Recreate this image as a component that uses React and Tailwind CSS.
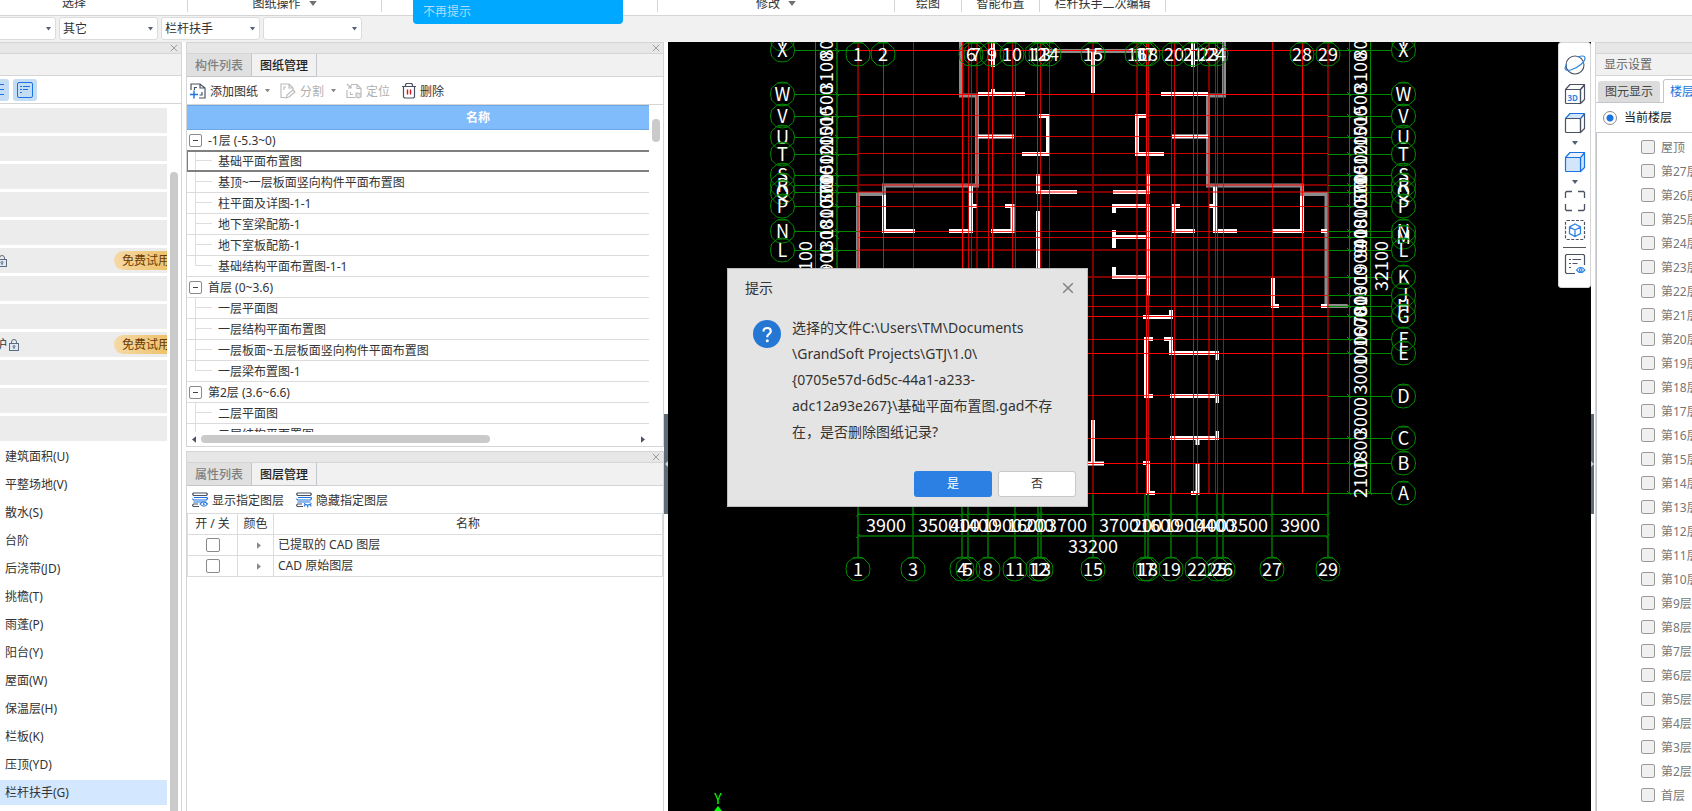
import React from "react";

const INK = "#4a5263";
const BLUE = "#1a73e0";

/* ---------- small icons ---------- */

function Caret({ className = "", size = 6, color = "#555f6e" }) {
  return (
    <svg className={className} width={size} height={size / 2 + 1} viewBox="0 0 6 4" aria-hidden="true">
      <path d="M0 0h6L3 4z" fill={color} />
    </svg>
  );
}

function SideArrow({ dir, color = "#4a5263", className = "" }) {
  return (
    <svg className={className} width="4" height="7" viewBox="0 0 5 8" aria-hidden="true">
      <path d={dir === "left" ? "M5 0v8L0 4z" : "M0 0v8l5-4z"} fill={color} />
    </svg>
  );
}

function CloseIcon({ size = 9, color = "#999" }) {
  return (
    <svg width={size} height={size} viewBox="0 0 10 10" stroke={color} strokeWidth="1.2" aria-hidden="true">
      <path d="M1 1l8 8M9 1l-8 8" />
    </svg>
  );
}

function Lock() {
  return (
    <svg className="shrink-0" width="10" height="12" viewBox="0 0 10 12" fill="none" stroke="#5d6b80" aria-hidden="true">
      <path d="M2.5 4.5V3a2.5 2.5 0 015 0v1.5" />
      <rect x=".5" y="4.5" width="9" height="7" fill="#dfe9f3" />
      <circle cx="5" cy="7.5" r="1" />
      <path d="M5 8.5V10" />
    </svg>
  );
}

function ListIcon() {
  return (
    <svg width="16" height="16" viewBox="0 0 16 16" fill="none" stroke={BLUE} aria-hidden="true">
      <rect x=".5" y=".5" width="15" height="15" rx="1.5" />
      <path d="M3 4.5h2M6 4.5h7M3 7.5h2M6 7.5h5M3 10.5h2" />
    </svg>
  );
}

function AddSheetIcon() {
  return (
    <svg width="16" height="16" viewBox="0 0 16 16" fill="none" stroke={INK} strokeWidth="1.2" aria-hidden="true">
      <path d="M1 7V1h9l5 4v10H9M10 1v4h5" />
      <path d="M4.5 7V4.500H7M12 9v3H9.500" />
      <path d="M0 11.500h8M4 7.500v8" stroke={BLUE} strokeWidth="1.400" />
    </svg>
  );
}

function SplitIcon() {
  return (
    <svg width="16" height="16" viewBox="0 0 16 16" fill="none" stroke="#b9b9b9" strokeWidth="1.1" aria-hidden="true">
      <path d="M5 14.500H1V1h8l4 4v2M9 1v4h4M4 7V4h2" />
      <path d="M7 12l6-5 2 2-6 5-3 1z" />
    </svg>
  );
}

function LocateIcon() {
  return (
    <svg width="16" height="16" viewBox="0 0 16 16" fill="none" stroke="#b9b9b9" strokeWidth="1.1" aria-hidden="true">
      <path d="M1 7v7.500h8M5 1.500h6l4 4V11M11 1.500v4h4M4.500 9v2.500H7" />
      <path d="M1 1l4 4M5 2v3H2" />
      <path d="M10 10v4l3 1 2-1v-3l-4-1z" fill="#e6e6e6" />
    </svg>
  );
}

function TrashIcon() {
  return (
    <svg width="14" height="16" viewBox="0 0 14 16" fill="none" stroke={INK} strokeWidth="1.2" aria-hidden="true">
      <path d="M0 3.500h14M3.500 3V1.500l1-1h5l1 1V3M1.500 4v10l1 1h9l1-1V4" />
      <path d="M5.500 6.500v5M8.500 6.500v5" stroke="#d01616" strokeWidth="1.400" />
    </svg>
  );
}

function LayersIcon({ open }) {
  return (
    <svg width="16" height="16" viewBox="0 0 16 16" fill="none" aria-hidden="true">
      <g stroke={INK} strokeWidth="1.200">
        <path d="M1.500 1h13l1 1.200-1 1.300h-13L.5 2.200z" />
        <path d="M7 14.500H1.500l-1-1.200 1-1.300H6" />
      </g>
      <path d="M2 5.500h13l.5 1.200-1 1.300h-13L.5 6.700M1.500 10h13" stroke={BLUE} strokeWidth="1.200" />
      {open ? (
        <g stroke={BLUE} strokeWidth="1.100">
          <path d="M8 12q3.500-4 7.500 0-3.500 4.500-7.500 0z" fill="#fff" />
          <path d="M11.700 11v1.500h1" />
        </g>
      ) : (
        <path d="M8 11.500q3.500 3 7.500 0M9 13l-1 1.500M11.700 13.500V15.500M14.300 13l1 1.500" stroke={BLUE} strokeWidth="1.100" />
      )}
    </svg>
  );
}

function OrbitIcon() {
  return (
    <svg width="22" height="22" viewBox="0 0 22 22" fill="none" aria-hidden="true">
      <circle cx="11" cy="11" r="9" stroke={INK} strokeWidth="1.100" />
      <path d="M14 3c4-1.500 7-1.500 7 1 0 4-6 9-13 11.500C4 17 1 16.500 1 14.500c0-1.500 1-3 2-4" stroke="#2f86e8" strokeWidth="1.200" />
    </svg>
  );
}

function CubeIcon({ front = INK, face = "none", top = INK, topFill = "none", label }) {
  return (
    <svg width="22" height="22" viewBox="0 0 22 22" fill="none" strokeWidth="1.200" strokeLinejoin="round" aria-hidden="true">
      <path d="M16.500 6.500L20.500 2v14.500l-4 4z" stroke={front} fill={face} />
      <path d="M1.500 6.500L6 1.500h14.500l-4 5z" stroke={top} fill={topFill} />
      <rect x="1.500" y="6.500" width="15" height="14" rx="1" stroke={front} fill={face} />
      {label && (
        <text x="3.500" y="18" fontSize="8" fontWeight="700" fill="#2f86e8" fontFamily="Open Sans, sans-serif">
          3D
        </text>
      )}
    </svg>
  );
}

function FrameIcon() {
  return (
    <svg width="22" height="22" viewBox="0 0 22 22" fill="none" stroke={INK} strokeWidth="1.300" aria-hidden="true">
      <path d="M1.500 8V2.500l1-1H8M14 1.500h5.500l1 1V8M20.500 14v5.500l-1 1H14M8 20.500H2.500l-1-1V14" />
    </svg>
  );
}

function BoxSelectIcon() {
  return (
    <svg width="22" height="22" viewBox="0 0 22 22" fill="none" aria-hidden="true">
      <rect x="1.500" y="1.500" width="19" height="19" rx="1.500" stroke={INK} strokeWidth="1.200" strokeDasharray="3 1.500" />
      <path d="M11 5l5.500 3v6.500L11 17.500l-5.500-3V8zM5.500 8L11 11l5.500-3M11 11v6.500" stroke="#2f86e8" strokeWidth="1.300" />
    </svg>
  );
}

function ListEyeIcon() {
  return (
    <svg width="22" height="22" viewBox="0 0 22 22" fill="none" stroke={INK} strokeWidth="1.200" aria-hidden="true">
      <path d="M11 20.500H2.500l-1-1v-17l1-1h17l1 1V12" />
      <path d="M5 6.500h2M8.500 6.500h8.500M5 10.500h2M8.500 10.500h5M5 14.500h2" />
      <path d="M12.500 17q4.200-5.500 8.500 0-4.300 5-8.500 0z" stroke="#2f86e8" fill="#fff" />
      <circle cx="16.700" cy="17" r="1.300" stroke="#2f86e8" />
    </svg>
  );
}

/* ---------- ribbon ---------- */

function RibbonGroup({ label, arrow, className }) {
  return (
    <div className={`h-[12px] shrink-0 border-r border-[#d5d5d5] ${className}`}>
      {label && (
        <button type="button" className="-mt-[5px] flex items-center gap-2 leading-4 whitespace-nowrap">
          {label}
          {arrow && <Caret size={8} color="#707070" />}
        </button>
      )}
    </div>
  );
}

function Ribbon() {
  return (
    <header className="relative flex h-[16px] shrink-0 overflow-hidden border-b border-[#d5d5d5] bg-white">
      <RibbonGroup label="选择" className="w-[188px] pl-[62px]" />
      <RibbonGroup label="图纸操作" arrow className="flex w-[194px] justify-center" />
      <RibbonGroup className="w-[276px]" />
      <RibbonGroup label="修改" arrow className="flex w-[237px] justify-center" />
      <RibbonGroup label="绘图" className="flex w-[67px] justify-center" />
      <RibbonGroup label="智能布置" className="flex w-[78px] justify-center" />
      <RibbonGroup label="栏杆扶手二次编辑" className="flex w-[126px] justify-center" />
    </header>
  );
}

function Combo({ value, label, className }) {
  return (
    <div className={`relative h-[23px] shrink-0 ${className}`}>
      <select
        aria-label={label}
        defaultValue={value}
        className="h-full w-full appearance-none rounded-[3px] border border-[#dcdcdc] bg-white pl-[3px] text-[12px] text-[#333]"
      >
        <option value={value}>{value}</option>
      </select>
      <Caret size={5} className="pointer-events-none absolute top-[10px] right-[5px]" />
    </div>
  );
}

function ComboBar() {
  return (
    <div className="flex h-[26px] shrink-0 items-start gap-[3px] bg-[#f1f1f1] pt-px">
      <Combo label="楼层" value="" className="-ml-1 w-[60px]" />
      <Combo label="构件类别" value="其它" className="w-[99px]" />
      <Combo label="构件类型" value="栏杆扶手" className="w-[99px]" />
      <Combo label="构件名称" value="" className="w-[99px]" />
    </div>
  );
}

/* ---------- panels ---------- */

function Grip({ closable = true }) {
  return (
    <div className="flex h-[12px] shrink-0 items-center justify-end border-y border-[#d5d5d5] bg-[#e7e7e7] pr-[3px]">
      {closable && (
        <button type="button" aria-label="关闭面板">
          <CloseIcon size={8} />
        </button>
      )}
    </div>
  );
}

function TabStrip({ tabs }) {
  return (
    <div role="tablist" className="flex h-[23px] shrink-0 border-b border-[#d5d5d5] bg-[#f1f1f1]">
      {tabs.map((t, i) => (
        <button
          key={t}
          type="button"
          role="tab"
          aria-selected={i === 1}
          className={
            i === 1
              ? "h-[23px] w-[66px] border border-t-0 border-[#c3c7cc] bg-[#f1f1f1] pt-[2px] font-medium text-[#222]"
              : "h-[23px] w-[64px] border-b border-[#c3c7cc] bg-[#e0e0e0] pt-[2px] font-medium text-[#808080]"
          }
        >
          {t}
        </button>
      ))}
    </div>
  );
}

const GROUPS = ["", "", "", "", "", "trial-a", "", "", "trial-b", "", "", ""];
const MODULES = [
  "建筑面积(U)", "平整场地(V)", "散水(S)", "台阶", "后浇带(JD)", "挑檐(T)", "雨蓬(P)",
  "阳台(Y)", "屋面(W)", "保温层(H)", "栏板(K)", "压顶(YD)", "栏杆扶手(G)",
];

function TrialRow({ text }) {
  return (
    <>
      {text && <span className="-ml-[5px]">{text}</span>}
      <span className={text ? "ml-[2px]" : "-ml-[3px]"}>
        <Lock />
      </span>
      <span className="ml-auto flex h-[19px] w-[53px] items-center rounded-l-full bg-linear-to-r from-[#f5d9a5] to-[#eec26b] pl-2 whitespace-nowrap text-[#6b3a07]">
        免费试用
      </span>
    </>
  );
}

function ModulePanel() {
  return (
    <aside className="flex w-[182px] shrink-0 flex-col border-r border-[#d5d5d5] bg-white">
      <Grip />
      <div className="h-[22px] shrink-0 border-b border-[#d5d5d5] bg-[#f1f1f1]" />
      <div className="flex h-[28px] shrink-0 items-center gap-1 border-b border-[#d5d5d5]">
        <button type="button" aria-label="图标视图" className="-ml-[15px] flex h-[22px] w-[24px] items-center justify-center rounded-[3px] bg-[#c5dcf5]">
          <svg width="16" height="16" viewBox="0 0 16 16" stroke={BLUE} aria-hidden="true">
            <path d="M3 2.500h12M3 7.500h12M3 12.500h12" />
          </svg>
        </button>
        <button type="button" aria-label="列表视图" className="flex h-[22px] w-[24px] items-center justify-center rounded-[3px] bg-[#c5dcf5]">
          <ListIcon />
        </button>
      </div>
      <div className="flex min-h-0 flex-1 overflow-hidden">
        <ul className="mt-1 flex w-[167px] shrink-0 flex-col gap-[3px]">
          {GROUPS.map((g, i) => (
            <li key={i} className="flex h-[25px] shrink-0 items-center overflow-hidden bg-[#ececec]">
              {g === "trial-a" && <TrialRow />}
              {g === "trial-b" && <TrialRow text="护" />}
            </li>
          ))}
          {MODULES.map((m, i) => (
            <li
              key={m}
              className={`flex h-[25px] shrink-0 items-center pl-[5px] ${i === MODULES.length - 1 ? "bg-[#d3e7ff]" : ""}`}
            >
              <a href="#module">{m}</a>
            </li>
          ))}
        </ul>
        <div className="mt-[68px] ml-[3px] w-2 rounded-t-full bg-[#cacaca]" />
      </div>
    </aside>
  );
}

const TREE = [
  ["-1层 (-5.3~0)", ["基础平面布置图", "基顶~一层板面竖向构件平面布置图", "柱平面及详图-1-1", "地下室梁配筋-1", "地下室板配筋-1", "基础结构平面布置图-1-1"]],
  ["首层 (0~3.6)", ["一层平面图", "一层结构平面布置图", "一层板面~五层板面竖向构件平面布置图", "一层梁布置图-1"]],
  ["第2层 (3.6~6.6)", ["二层平面图", "二层结构平面置图", "二层梁布置图"]],
];

function TreeLeaf({ name, last, selected }) {
  return (
    <li
      className={
        selected
          ? "-mt-px flex h-[22px] items-center border-y-2 border-l border-[#7f7f7f] pl-[7px]"
          : "flex h-[21px] items-center border-b border-[#dcdcdc] pl-2"
      }
    >
      <span className="flex h-full w-[17px] flex-col">
        <span className="h-1/2 border-b border-l border-[#dedede]" />
        {!last && <span className="h-1/2 border-l border-[#dedede]" />}
      </span>
      <span className="ml-[6px] pt-[2px] whitespace-nowrap">{name}</span>
    </li>
  );
}

function SheetTree() {
  return (
    <ul className="h-[302px] overflow-hidden">
      {TREE.map(([floor, sheets]) => (
        <li key={floor}>
          <div className="flex h-[21px] items-center gap-[6px] border-b border-[#dcdcdc] pl-[2px]">
            <button
              type="button"
              aria-label="折叠"
              className="flex h-[13px] w-[13px] items-center justify-center rounded-[2px] border border-[#8a8a8a]"
            >
              <span className="h-px w-[5px] bg-[#444]" />
            </button>
            <span className="pt-[2px]">{floor}</span>
          </div>
          <ul>
            {sheets.map((s, i) => (
              <TreeLeaf key={s} name={s} last={i === sheets.length - 1} selected={s === "基础平面布置图"} />
            ))}
          </ul>
        </li>
      ))}
    </ul>
  );
}

function ToolButton({ icon, children, disabled, arrow }) {
  return (
    <button
      type="button"
      disabled={disabled}
      className={`flex items-center gap-1 whitespace-nowrap ${disabled ? "text-[#b0b0b0]" : "text-[#333]"}`}
    >
      {icon}
      <span className="pt-[2px]">{children}</span>
      {arrow && <Caret size={5} color="#888" className="ml-[3px]" />}
    </button>
  );
}

function SheetPanel() {
  return (
    <section className="flex shrink-0 flex-col border-r border-b border-l border-[#d5d5d5] bg-white">
      <Grip />
      <TabStrip tabs={["构件列表", "图纸管理"]} />
      <div className="flex h-[28px] items-center gap-[10px] border-b border-[#d5d5d5] pl-[3px]">
        <ToolButton icon={<AddSheetIcon />} arrow>添加图纸</ToolButton>
        <ToolButton icon={<SplitIcon />} disabled arrow>分割</ToolButton>
        <ToolButton icon={<LocateIcon />} disabled>定位</ToolButton>
        <div className="pl-[2px]">
          <ToolButton icon={<TrashIcon />}>删除</ToolButton>
        </div>
      </div>
      <div className="flex">
        <div className="w-[462px] shrink-0">
          <div className="h-[25px] border-y border-[#6ca7e6] bg-[#80bbfb] pl-[120px] text-center leading-[23px] font-bold text-white">
            名称
          </div>
          <SheetTree />
        </div>
        <div className="mt-[14px] ml-[3px] h-[23px] w-2 rounded-full bg-[#cacaca]" />
      </div>
      <div className="flex h-[14px] items-center pl-[5px]">
        <SideArrow dir="left" />
        <span className="ml-[5px] h-2 w-[289px] rounded-full bg-[#cacaca]" />
        <SideArrow dir="right" className="mr-[18px] ml-auto" />
      </div>
    </section>
  );
}

function LayerPanel() {
  return (
    <section className="flex min-h-0 flex-1 flex-col border-x border-[#d5d5d5] bg-white">
      <Grip />
      <TabStrip tabs={["属性列表", "图层管理"]} />
      <div className="flex h-[27px] shrink-0 items-center gap-[12px] pl-[5px]">
        <ToolButton icon={<LayersIcon open />}>显示指定图层</ToolButton>
        <ToolButton icon={<LayersIcon />}>隐藏指定图层</ToolButton>
      </div>
      <table className="w-full table-fixed border-collapse [&_td]:border [&_td]:border-[#dcdcdc] [&_th]:border [&_th]:border-[#dcdcdc] [&_th]:font-normal">
        <thead>
          <tr className="h-[21px]">
            <th scope="col" className="w-[50px]">开 / 关</th>
            <th scope="col" className="w-[36px]">颜色</th>
            <th scope="col">名称</th>
          </tr>
        </thead>
        <tbody>
          {["已提取的 CAD 图层", "CAD 原始图层"].map((n) => (
            <tr key={n} className="h-[21px]">
              <td>
                <input
                  type="checkbox"
                  aria-label={n}
                  className="mx-auto block h-[14px] w-[14px] appearance-none rounded-[2px] border border-[#8a8a8a] bg-white"
                />
              </td>
              <td>
                <SideArrow dir="right" color="#888" className="ml-[19px]" />
              </td>
              <td className="pl-1">{n}</td>
            </tr>
          ))}
        </tbody>
      </table>
    </section>
  );
}

/* ---------- drawing ---------- */

const V_DIM = [858, 977, 1093, 1137, 1209, 1328];
const V_MID = [913, 968, 971, 988, 1012, 1015, 1040, 1049, 1148, 1171, 1174, 1197, 1215, 1217, 1223, 1272];
const V_HOT = [883, 962, 992, 1037, 1146, 1193, 1302];
const H_DIM = [175, 185, 192, 250, 277];
const H_MID = [115, 136, 153, 206, 231, 237, 295, 306, 339, 395, 438];
const H_HOT = [50, 94, 316, 353, 463, 493];

const GREY_WALLS =
  "M961 42V95.500H977V185.500H884V194H858V306H838M884 185V194M1224 42V95.500H1208V185.500H1302V194H1326.500V306H1348M1049 51H1140";
const WHITE_WALLS = [
  "M978 94H1025M993 89V96M993 42V67M978 136.500H1014M1039 116H1048V154H1022M1038 174V192H1077M972 206H977M1005 206H1012.500V231H991",
  "M971 186V231H949M884 195V231H915M1038 211V268M1093 52V93M1161 94H1208M1193 42V67M1172 136.500H1208M1146 116H1137V154H1164",
  "M1148 174V192H1113M1148 296V206H1114V213M1114 230V248M1114 237H1148M1114 267V277H1148M1209 206H1215M1215 187V231H1237",
  "M1180 206H1174V231H1195M1302 196V231H1272M1321 231H1327M1143 317H1171V310M1153 339H1146V396H1153M1164 339H1171V353H1217V360",
  "M1170 396H1217V403M1170 438H1217V431M1197.500 439V445M1093 420V463M1080 463.500H1104M1143 463H1148V493H1155M1197.500 464V493H1191",
  "M1273 278V306H1279M1321 306H1327",
];

const AXIS_ROWS = [
  ["Y", 39], ["X", 50], ["W", 94], ["V", 116], ["U", 137], ["T", 154], ["S", 175], ["R", 185], ["Q", 192], ["P", 206],
  ["N", 231], ["M", 237], ["L", 250], ["K", 277], ["J", 295], ["H", 306], ["G", 316], ["F", 339], ["E", 353],
  ["D", 396], ["C", 438], ["B", 463], ["A", 493],
];
const SPANS = [800, 3100, 1500, 1500, 1200, 1500, 700, 500, 1000, 1800, 400, 900, 1900, 1300, 800, 700, 1600, 1000, 3000, 3000, 1800, 2100];
const TOP_AXES = [
  [1, 858], [2, 883], [6, 971], [7, 976], [9, 992], [10, 1012], [12, 1037], [13, 1041], [14, 1049], [15, 1093], [16, 1137],
  [17, 1145], [18, 1148], [20, 1174], [21, 1193], [23, 1209], [24, 1216], [28, 1302], [29, 1328],
];
const BOTTOM_AXES = [
  [1, 858], [3, 913], [4, 962], [5, 968], [8, 988], [11, 1015], [12, 1038], [13, 1041], [15, 1093], [17, 1145], [18, 1148],
  [19, 1171], [22, 1197], [25, 1217], [26, 1223], [27, 1272], [29, 1328],
];
const BOTTOM_SPANS = [
  [3900, 886], [3500, 938], [400, 965], [1400, 978], [1900, 1002], [1600, 1027], [200, 1039], [3700, 1067], [3700, 1119],
  [200, 1147], [1600, 1160], [1900, 1184], [1400, 1207], [400, 1220], [3500, 1248], [3900, 1300],
];

const OCT = "M-5-11L5-11L11-5L12 0L11 6L5 11L0 12L-6 11L-11 6L-12 0L-11-6L-5-11L0-12L5-11";

function Bubble({ x, y, label }) {
  return (
    <g transform={`translate(${x} ${y})`}>
      <path d={OCT} fill="none" stroke="#008a00" />
      <text textAnchor="middle" y="6.500" fill="#fff">
        {label}
      </text>
    </g>
  );
}

function Upright({ x, y, children }) {
  return (
    <text transform={`translate(${x + 7} ${y}) rotate(-90)`} textAnchor="middle" fill="#fff">
      {children}
    </text>
  );
}

function Drawing() {
  const left = AXIS_ROWS.filter(([n, y]) => y <= 250 && n !== "M");
  return (
    <svg
      className="block shrink-0"
      width="923"
      height="769"
      viewBox="668 42 923 769"
      fontFamily="'Noto Sans CJK SC', sans-serif"
      fontSize="18"
      fontWeight="400"
      role="img"
      aria-label="基础平面布置图"
    >
      <path d={GREY_WALLS} fill="none" stroke="#8c8c8c" strokeWidth="4" />
      <g fill="none" stroke="#fff" strokeWidth="4">
        {WHITE_WALLS.map((d) => (
          <path key={d} d={d} />
        ))}
      </g>
      <g fill="none" shapeRendering="crispEdges">
        <g stroke="#f00" strokeWidth="2" opacity="0.5">
          {V_DIM.map((x) => <path key={x} d={`M${x} 42V493`} />)}
          {H_DIM.map((y) => <path key={y} d={`M858 ${y}H1328`} />)}
        </g>
        <g stroke="#f00" opacity="0.8">
          {V_MID.map((x) => <path key={x} d={`M${x + 0.5} 42V493`} />)}
          {H_MID.map((y) => <path key={y} d={`M858 ${y + 0.5}H1328`} />)}
        </g>
        <g stroke="#f00">
          {V_HOT.map((x) => <path key={x} d={`M${x + 0.5} 42V493`} />)}
          {H_HOT.map((y) => <path key={y} d={`M858 ${y + 0.5}H1328`} />)}
        </g>
        <g stroke="#008a00">
          {left.map(([n, y]) => <path key={n} d={`M795 ${y + 0.5}H858`} />)}
          {AXIS_ROWS.map(([n, y]) => <path key={n} d={`M1328 ${y + 0.5}H1391`} />)}
          <path d="M815.500 42V493M1349.500 42V493M1370.500 42V493M858 514.500H1328" />
        </g>
        <g stroke="#005a00" strokeWidth="2">
          <path d="M837 42V493M858 536H1328" />
          {BOTTOM_AXES.map(([n, x]) => <path key={n} d={`M${x} 494V557`} />)}
        </g>
      </g>
      <g stroke="#008a00">
        {BOTTOM_AXES.map(([n, x]) => <path key={n} d={`M${x - 2} 516.500l4-4`} />)}
        {AXIS_ROWS.map(([n, y]) => <path key={n} d={`M1347 ${y - 2}l4 4M835 ${y - 2}l4 4`} />)}
        <path d="M856 538l4-4M1326 538l4-4M1368 491l4 4" />
      </g>

      {left.map(([n, y]) => <Bubble key={n} x={782.5} y={y} label={n} />)}
      {AXIS_ROWS.map(([n, y]) => <Bubble key={n} x={1403.5} y={y} label={n} />)}
      {TOP_AXES.map(([n, x]) => <Bubble key={n} x={x} y={54} label={n} />)}
      {BOTTOM_AXES.map(([n, x]) => <Bubble key={n} x={x} y={569} label={n} />)}

      {SPANS.map((s, i) => {
        const y = (AXIS_ROWS[i][1] + AXIS_ROWS[i + 1][1]) / 2;
        return (
          <g key={i}>
            {i !== 10 && i !== 11 && i < 14 && <Upright x={826} y={y}>{s}</Upright>}
            <Upright x={1360} y={y}>{s}</Upright>
          </g>
        );
      })}
      <Upright x={826} y={240}>1300</Upright>
      <Upright x={805} y={266}>32100</Upright>
      <Upright x={1381} y={266}>32100</Upright>

      {BOTTOM_SPANS.map(([s, x]) => (
        <text key={x} x={x} y="532" textAnchor="middle" fill="#fff">
          {s}
        </text>
      ))}
      <text x="1093" y="553" textAnchor="middle" fill="#fff">33200</text>

      <text x="718" y="804" fontSize="14" textAnchor="middle" fill="#0f0">Y</text>
      <path d="M714 811l4-5 4 5z" fill="#0f0" />
    </svg>
  );
}

function ViewTools() {
  const btn = "flex h-[22px] w-[22px] items-center justify-center";
  return (
    <div className="absolute top-0 right-0 flex w-[33px] flex-col items-center rounded-[3px] border border-[#d5d5d5] bg-white pt-[11px] pb-[12px]">
      <button type="button" aria-label="动态观察" className={btn}><OrbitIcon /></button>
      <button type="button" aria-label="三维" className={`mt-[7px] ${btn}`}><CubeIcon label /></button>
      <button type="button" aria-label="俯视" className={`mt-[7px] ${btn}`}><CubeIcon top="#1a73e0" topFill="#d2e5fb" /></button>
      <Caret size={6} className="mt-[7px]" />
      <button type="button" aria-label="实体" className={`mt-[6px] ${btn}`}><CubeIcon front="#1a73e0" top="#1a73e0" face="#d2e5fb" topFill="#eaf3fd" /></button>
      <Caret size={6} className="mt-[7px]" />
      <button type="button" aria-label="全屏" className={`mt-[6px] ${btn}`}><FrameIcon /></button>
      <button type="button" aria-label="局部三维" className={`mt-[7px] ${btn}`}><BoxSelectIcon /></button>
      <span className="mt-[6px] h-px w-[23px] bg-[#555]" />
      <button type="button" aria-label="显示设置" className={`mt-[5px] ${btn}`}><ListEyeIcon /></button>
    </div>
  );
}

function Dialog() {
  return (
    <div
      role="dialog"
      aria-labelledby="dlg-title"
      className="absolute top-[226px] left-[59px] flex w-[361px] flex-col border border-[#bdbdbd] bg-[#e5e4e4] text-[14px] text-[#333]"
    >
      <div className="flex h-[38px] items-center justify-between pr-[13px] pl-[17px]">
        <h2 id="dlg-title">提示</h2>
        <button type="button" aria-label="关闭"><CloseIcon size={12} color="#808080" /></button>
      </div>
      <div className="flex gap-[11px] pt-[8px] pl-[25px]">
        <svg className="mt-[5px] shrink-0" width="28" height="28" viewBox="0 0 28 28" aria-hidden="true">
          <circle cx="14" cy="14" r="14" fill="#2478d4" />
          <path d="M10.500 11.500q0-3.500 3.700-3.500 3.600 0 3.600 3.200 0 1.800-1.800 2.900-1.700 1-1.700 2.400v.8" fill="none" stroke="#fff" strokeWidth="2.200" />
          <circle cx="14.300" cy="20.800" r="1.500" fill="#fff" />
        </svg>
        <p className="leading-[26px] whitespace-nowrap">
          选择的文件C:\Users\TM\Documents<br />
          \GrandSoft Projects\GTJ\1.0\<br />
          {"{0705e57d-6d5c-44a1-a233-"}<br />
          {"adc12a93e267}"}\基础平面布置图.gad不存<br />
          在，是否删除图纸记录?
        </p>
      </div>
      <div className="mt-[26px] mb-[9px] flex justify-end gap-[6px] pr-[11px] text-[12px]">
        <button type="button" className="h-[26px] w-[78px] rounded-[3px] bg-[#2c7fe3] text-white">是</button>
        <button type="button" className="h-[26px] w-[78px] rounded-[3px] border border-[#c8c8c8] bg-white">否</button>
      </div>
    </div>
  );
}

function Handle({ left }) {
  return (
    <button
      type="button"
      aria-label="折叠面板"
      className={`mt-[372px] flex h-[100px] shrink-0 items-center justify-end bg-[#5f6b78] ${left ? "w-1" : "w-[3px]"}`}
    >
      <svg width="3" height="6" viewBox="0 0 3 6" aria-hidden="true">
        <path d={left ? "M3 0v6L0 3z" : "M0 0v6l3-3z"} fill="#ccd2d8" />
      </svg>
    </button>
  );
}

/* ---------- display settings ---------- */

const FLOORS = ["屋顶", ...Array.from({ length: 26 }, (_, i) => `第${27 - i}层`), "首层"];

function DisplayPanel() {
  return (
    <aside className="ml-px flex w-[97px] shrink-0 flex-col overflow-hidden border-l border-[#d5d5d5] bg-white whitespace-nowrap">
      <Grip closable={false} />
      <h2 className="h-[22px] shrink-0 border-b border-[#d5d5d5] bg-[#f1f1f1] pl-2 leading-[22px] text-[#666]">显示设置</h2>
      <div role="tablist" className="flex h-[27px] shrink-0 items-end gap-[3px] border-b border-[#c3c7cc] pl-[2px]">
        <button type="button" role="tab" aria-selected="false" className="h-[21px] w-[62px] shrink-0 rounded-t-[3px] bg-[#dcdcdc] text-[#444]">
          图元显示
        </button>
        <button type="button" role="tab" aria-selected="true" className="-mb-px h-[24px] w-[62px] shrink-0 rounded-t-[3px] border border-b-0 border-[#c3c7cc] bg-white text-[#1a73e0]">
          楼层显示
        </button>
      </div>
      <label className="flex h-[29px] shrink-0 items-center gap-[7px] pl-[7px] text-[#222]">
        <input
          type="radio"
          name="scope"
          defaultChecked
          className="h-[14px] w-[14px] appearance-none rounded-full border border-[#8a8a8a] bg-[radial-gradient(circle,#1a73e0_3px,#ffffff_4px)]"
        />
        当前楼层
      </label>
      <ul className="min-h-0 flex-1 overflow-hidden border-t border-l border-[#c3c7cc] pt-[2px]">
        {FLOORS.map((f) => (
          <li key={f}>
            <label className="flex h-6 items-center gap-[6px] pl-[44px] text-[#777]">
              <input type="checkbox" className="h-[14px] w-[14px] shrink-0 appearance-none rounded-[2px] border border-[#9a9a9a] bg-[#f0f0f0]" />
              <span className="pt-[2px]">{f}</span>
            </label>
          </li>
        ))}
      </ul>
    </aside>
  );
}

export default function App() {
  return (
    <div className="relative flex h-screen flex-col overflow-hidden bg-white font-['Noto_Sans','Noto_Sans_CJK_SC',sans-serif] text-[12px] leading-4 text-[#333]">
      <Ribbon />
      <div className="absolute top-0 left-[413px] z-10 h-6 w-[210px] rounded-b-[4px] bg-[#00a8ff] pl-[10px] leading-6 text-[#b0dcff]">
        不再提示
      </div>
      <ComboBar />
      <div className="flex min-h-0 flex-1">
        <ModulePanel />
        <div className="ml-1 flex w-[478px] shrink-0 flex-col gap-1">
          <SheetPanel />
          <LayerPanel />
        </div>
        <Handle left />
        <main className="relative min-w-0 flex-1 overflow-hidden bg-black">
          <Drawing />
          <Dialog />
          <ViewTools />
        </main>
        <Handle />
        <DisplayPanel />
      </div>
    </div>
  );
}
